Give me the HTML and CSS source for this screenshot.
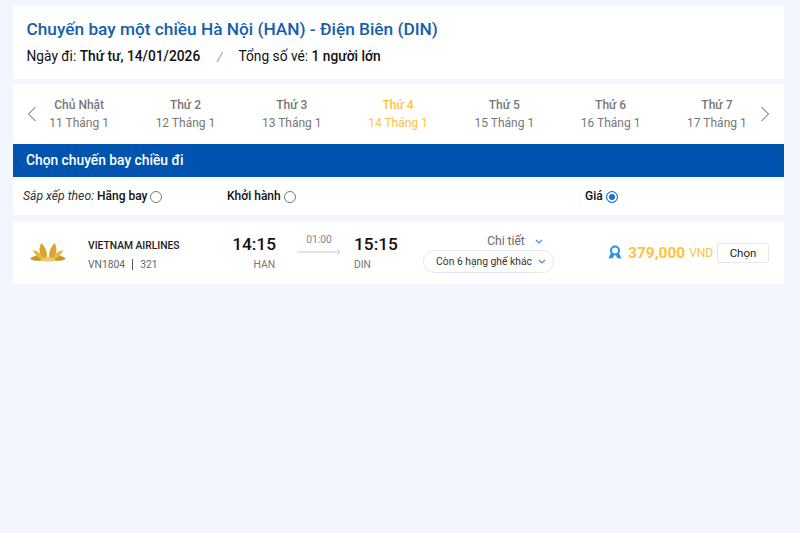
FILE: index.html
```html
<!DOCTYPE html>
<html lang="en">
<head>
    <meta charset="UTF-8">
    <title>Chọn chuyến bay</title>
    <link rel="stylesheet" href="styles.css">
</head>
<body>
    <div class="container">
        <div class="summary">
            <h3>Chuyến bay một chiều Hà Nội (HAN) - Điện Biên (DIN)</h3>
            <div class="summary-info">
                <span>Ngày đi: <b>Thứ tư, 14/01/2026</b></span>
                <i class="slash">/</i>
                <span>Tổng số vé: <b>1 người lớn</b></span>
            </div>
        </div>

        <div class="results">
            <div class="dates">
                <svg class="arrow arrow-prev" width="10" height="16" viewBox="0 0 10 16"><path d="M8.5 1 L1.5 8 L8.5 15" /></svg>
                <div class="date"><b>Chủ Nhật</b><span>11 Tháng 1</span></div>
                <div class="date"><b>Thứ 2</b><span>12 Tháng 1</span></div>
                <div class="date"><b>Thứ 3</b><span>13 Tháng 1</span></div>
                <div class="date active"><b>Thứ 4</b><span>14 Tháng 1</span></div>
                <div class="date"><b>Thứ 5</b><span>15 Tháng 1</span></div>
                <div class="date"><b>Thứ 6</b><span>16 Tháng 1</span></div>
                <div class="date"><b>Thứ 7</b><span>17 Tháng 1</span></div>
                <svg class="arrow arrow-next" width="10" height="16" viewBox="0 0 10 16"><path d="M1.5 1 L8.5 8 L1.5 15" /></svg>
            </div>

            <div class="title-bar">Chọn chuyến bay chiều đi</div>

            <div class="sort">
                <div class="sort-airline"><em>Sắp xếp theo:</em> <b>Hãng bay</b> <span class="radio"></span></div>
                <div class="sort-time"><b>Khởi hành</b> <span class="radio"></span></div>
                <div class="sort-price"><b>Giá</b> <span class="radio checked"></span></div>
            </div>
        </div>

        <div class="flight">
            <svg class="logo" width="36" height="20" viewBox="0 0 36 20">
                <path class="petal-side" d="M0 16 C5 11 10 12 15 17 C9 18.500 4 18 0 16 Z" />
                <path class="petal-side" d="M36 16 C31 11 26 12 21 17 C27 18.500 32 18 36 16 Z" />
                <path class="petal-mid" d="M3 7 C8 8 12 11 15 17 C9 16 5 13 3 7 Z" />
                <path class="petal-mid" d="M33 7 C28 8 24 11 21 17 C27 16 31 13 33 7 Z" />
                <path class="petal-top" d="M11.500 0 C8 5 9 13 16 17 C18.500 11 16 5 11.500 0 Z" />
                <path class="petal-top" d="M24.500 0 C28 5 27 13 20 17 C17.500 11 20 5 24.500 0 Z" />
                <path class="petal-base" d="M10 17 C14 13 22 13 26 17 C22 19 14 19 10 17 Z" />
            </svg>
            <div class="airline">
                <b>VIETNAM AIRLINES</b>
                <span>VN1804 <i class="divider"></i> 321</span>
            </div>
            <div class="time time-from">
                <b>14:15</b>
                <span>HAN</span>
            </div>
            <div class="duration">
                <span>01:00</span>
                <svg width="44" height="8" viewBox="0 0 44 8"><path d="M0 4 H43 M40 1 L43 4 L40 7" /></svg>
            </div>
            <div class="time time-to">
                <b>15:15</b>
                <span>DIN</span>
            </div>
            <div class="detail">
                <div class="detail-link">Chi tiết
                    <svg class="chevron" width="8" height="5" viewBox="0 0 8 5"><path d="M1 1 L4 4 L7 1" /></svg>
                </div>
                <div class="seats">Còn 6 hạng ghế khác
                    <svg class="chevron" width="8" height="5" viewBox="0 0 8 5"><path d="M1 1 L4 4 L7 1" /></svg>
                </div>
            </div>
            <div class="price">
                <svg class="medal" width="14" height="15" viewBox="0 0 14 15">
                    <circle cx="7" cy="5.500" r="4" />
                    <path class="ribbon" d="M3 8 L0.500 13.500 L5 13 L6 10 Z M11 8 L13.500 13.500 L9 13 L8 10 Z" />
                </svg>
                <b>379,000</b>
                <span>VND</span>
            </div>
            <button class="choose-button">Chọn</button>
        </div>
    </div>
</body>
</html>
```

FILE: styles.css
```css
body {
    font-family: 'Roboto', sans-serif;
    background-color: #f3f7fd;
    margin: 0;
    padding: 0;
    color: #111;
}

.container {
    width: 771px;
    margin-left: 13px;
    padding-top: 5px;
}

.summary {
    background-color: #fff;
    height: 74px;
    padding: 14px 14px 0 13.5px;
    box-sizing: border-box;
    margin-bottom: 5px;
}

.summary h3 {
    margin: 0 0 8px;
    font-size: 17.25px;
    line-height: 21px;
    font-weight: 500;
    color: #1560ad;
}

.summary-info {
    display: flex;
    font-size: 13.75px;
    line-height: 17px;
}

.summary-info b {
    font-weight: 500;
}

.slash {
    color: #999;
    margin: 0 16px 0 17px;
    font-size: 13px;
}

.results {
    background-color: #fff;
    margin-bottom: 6px;
}

.dates {
    position: relative;
    height: 60px;
    display: flex;
    align-items: center;
    padding-left: 13px;
    box-sizing: border-box;
}

.arrow {
    position: absolute;
    top: 22px;
}

.arrow-prev {
    left: 14px;
}

.arrow-next {
    right: 14px;
}

.arrow path {
    fill: none;
    stroke: #555;
    stroke-width: 1;
}

.date {
    width: 106.3px;
    flex-shrink: 0;
    text-align: center;
    font-size: 12px;
    line-height: 18px;
    color: #777;
    display: flex;
    flex-direction: column;
}

.date b {
    font-weight: 500;
}

.date.active {
    color: #fcc33c;
}

.title-bar {
    background-color: #0054b0;
    color: #fff;
    height: 33px;
    line-height: 33px;
    padding-left: 13px;
    font-size: 13.8px;
    font-weight: 500;
}

.sort {
    height: 38px;
    display: flex;
    align-items: center;
    font-size: 12px;
    box-sizing: border-box;
}

.sort b {
    font-weight: 500;
}

.sort em {
    color: #333;
    font-size: 12.2px;
}

.sort-airline {
    width: 214px;
    padding-left: 10px;
    box-sizing: border-box;
}

.sort-time {
    width: 358px;
}

.radio {
    display: inline-block;
    width: 10px;
    height: 10px;
    border: 1px solid #777;
    border-radius: 50%;
    vertical-align: -3px;
}

.radio.checked {
    border-color: #1a7fd8;
    background-color: #1a6fd0;
    box-shadow: inset 0 0 0 2px #fff;
}

.flight {
    background-color: #fff;
    height: 63px;
    display: flex;
    align-items: center;
}

.logo {
    margin-left: 17px;
    flex-shrink: 0;
}

.logo .petal-top {
    fill: #d9a531;
}

.logo .petal-mid {
    fill: #e5b84a;
}

.logo .petal-side {
    fill: #c9962a;
}

.logo .petal-base {
    fill: #efc766;
}

.airline {
    width: 144px;
    margin-left: 22px;
    padding-top: 5px;
    display: flex;
    flex-direction: column;
    gap: 6px;
}

.airline b {
    font-size: 10.3px;
    line-height: 13px;
    font-weight: 500;
    color: #222;
}

.airline span {
    font-size: 10.3px;
    line-height: 13px;
    color: #666;
}

.divider {
    display: inline-block;
    width: 1px;
    height: 11px;
    background-color: #555;
    margin: 0 5px 0 4px;
    vertical-align: -2px;
}

.time {
    display: flex;
    flex-direction: column;
    width: 44px;
}

.time b {
    font-size: 17.3px;
    line-height: 22px;
    font-weight: 500;
}

.time span {
    font-size: 10.3px;
    line-height: 14px;
    margin-top: 3px;
    color: #777;
}

.time-from {
    text-align: right;
}

.time-from span {
    padding-right: 1px;
}

.duration {
    width: 44px;
    margin: 0 13px 0 21px;
    display: flex;
    flex-direction: column;
    align-items: center;
    font-size: 10.3px;
    color: #888;
    gap: 2px;
    padding-bottom: 17px;
}

.duration svg {
    flex-shrink: 0;
}

.duration path {
    fill: none;
    stroke: #ccc;
    stroke-width: 1;
}

.detail {
    width: 131px;
    margin-left: 25px;
    display: flex;
    flex-direction: column;
    align-items: center;
    gap: 1px;
}

.detail-link {
    font-size: 12px;
    line-height: 16px;
    color: #666;
    padding-left: 53px;
    padding-top: 1px;
    display: flex;
    align-items: center;
    gap: 10px;
}

.seats {
    width: 131px;
    height: 23px;
    box-sizing: border-box;
    border: 1px solid #e4e8ee;
    border-radius: 12px;
    padding-left: 5px;
    font-size: 10.3px;
    color: #333;
    display: flex;
    align-items: center;
    justify-content: center;
    gap: 6px;
}

.chevron {
    flex-shrink: 0;
}

.chevron path {
    fill: none;
    stroke: #3a8fdc;
    stroke-width: 1.2;
}

.price {
    display: flex;
    align-items: center;
    margin-left: 54px;
    width: 109px;
}

.medal {
    margin-right: 6px;
    flex-shrink: 0;
}

.medal circle {
    fill: none;
    stroke: #2b8fe6;
    stroke-width: 2;
}

.medal .ribbon {
    fill: #2b8fe6;
}

.price b {
    font-size: 15.5px;
    font-weight: 700;
    color: #fcc33c;
}

.price span {
    font-size: 12px;
    margin-left: 4px;
    color: #fcc33c;
}

.choose-button {
    width: 52px;
    height: 20px;
    padding: 0;
    background-color: #fff;
    border: 1px solid #e4e8ee;
    border-radius: 2px;
    font-family: 'Roboto', sans-serif;
    font-size: 11.5px;
    color: #222;
}
```
